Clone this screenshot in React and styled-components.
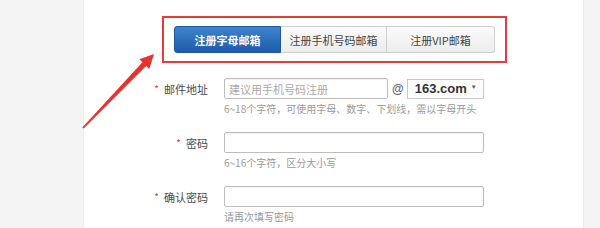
import React from "react";
import styled, { createGlobalStyle } from "styled-components";

const Global = createGlobalStyle`
  html, body { margin: 0; padding: 0; background: #fff; }
  body { font-family: "Noto Sans CJK SC", "Noto Sans", sans-serif; }
  * { box-sizing: border-box; }
`;

const Page = styled.div`
  position: relative;
  display: flex;
  width: 600px;
  height: 228px;
  overflow: hidden;
`;

const SidePanel = styled.div`
  width: ${(p) => p.$w}px;
  flex: none;
  background: #f4f4f4;
  border-${(p) => (p.$side === "left" ? "right" : "left")}: 1px solid #ececec;
`;

const Main = styled.div`
  flex: 1;
  background: #fff;
  padding: 16px 0 0 0;
  display: flex;
  flex-direction: column;
`;

const Highlight = styled.div`
  align-self: flex-start;
  margin-left: 78px;
  border: 2px solid #e63b3a;
  padding: 8px 10px;
  display: flex;
`;

const Tab = styled.div`
  width: ${(p) => p.$w}px;
  height: 27px;
  display: flex;
  align-items: center;
  justify-content: center;
  font-size: 11px;
  font-weight: ${(p) => (p.$active ? 700 : 400)};
  color: ${(p) => (p.$active ? "#fff" : "#444")};
  background: ${(p) =>
    p.$active
      ? "linear-gradient(#3f83cf, #1d5ca8)"
      : "linear-gradient(#fbfbfb, #ececec)"};
  border: 1px solid ${(p) => (p.$active ? "#1c57a0" : "#cfcfcf")};
  border-left-width: ${(p) => (p.$first ? 1 : 0)}px;
  border-radius: ${(p) =>
    p.$first ? "3px 0 0 3px" : p.$last ? "0 3px 3px 0" : "0"};
`;

const Form = styled.div`
  margin-top: 15px;
  display: flex;
  flex-direction: column;
  gap: 17px;
`;

const Row = styled.div`
  display: grid;
  grid-template-columns: 140px auto;
  grid-template-rows: 21px auto;
  row-gap: 3px;
`;

const Label = styled.div`
  grid-row: 1;
  display: flex;
  align-items: center;
  justify-content: flex-end;
  padding-right: 16px;
  font-size: 11px;
  color: #4a4a4a;
`;

const Star = styled.span`
  color: #d9363e;
  font-size: 10px;
  margin-right: 5px;
`;

const Field = styled.div`
  display: flex;
  align-items: center;
`;

const Input = styled.div`
  width: ${(p) => p.$w}px;
  height: 21px;
  border: 1px solid #bdbdbd;
  border-radius: 2px;
  box-shadow: inset 0 1px 1px rgba(0, 0, 0, 0.06);
  font-size: 11px;
  color: #aaa;
  display: flex;
  align-items: center;
  padding-left: 4px;
`;

const At = styled.span`
  font-family: "Liberation Sans", sans-serif;
  font-size: 12px;
  font-weight: 700;
  color: #666;
  margin: 0 3px 0 4px;
`;

const Select = styled.div`
  width: 77px;
  height: 20px;
  border: 1px solid #c8c8c8;
  display: flex;
  align-items: center;
  justify-content: space-between;
  padding: 0 6px 0 7px;
  font-family: "Liberation Sans", sans-serif;
  font-size: 13px;
  font-weight: 700;
  color: #333;
`;

const Caret = styled.span`
  font-size: 6px;
  color: #555;
  margin-top: -3px;
`;

const Hint = styled.div`
  grid-column: 2;
  font-size: 10px;
  line-height: 13px;
  color: #999;
`;

const Arrow = styled.svg`
  position: absolute;
  left: 0;
  top: 0;
  pointer-events: none;
`;

const rows = [
  { label: "邮件地址", w: 164, ph: "建议用手机号码注册", select: true, hint: "6~18个字符，可使用字母、数字、下划线，需以字母开头" },
  { label: "密码", w: 260, ph: "", hint: "6~16个字符，区分大小写" },
  { label: "确认密码", w: 260, ph: "", hint: "请再次填写密码" },
];

export default function App() {
  return (
    <>
      <Global />
      <Page>
        <SidePanel $w={84} $side="left" />
        <Main>
          <Highlight>
            <Tab $w={107} $active $first>注册字母邮箱</Tab>
            <Tab $w={106}>注册手机号码邮箱</Tab>
            <Tab $w={108} $last>注册VIP邮箱</Tab>
          </Highlight>
          <Form>
            {rows.map((r) => (
              <Row key={r.label}>
                <Label>
                  <Star>*</Star>
                  {r.label}
                </Label>
                <Field>
                  <Input $w={r.w}>{r.ph}</Input>
                  {r.select && (
                    <>
                      <At>@</At>
                      <Select>
                        163.com<Caret>▼</Caret>
                      </Select>
                    </>
                  )}
                </Field>
                <Hint>{r.hint}</Hint>
              </Row>
            ))}
          </Form>
        </Main>
        <SidePanel $w={17} $side="right" />
        <Arrow width="600" height="228" viewBox="0 0 600 228">
          <polygon
            points="82.3,127.5 142.4,62.3 139.3,59.3 154,54 149.3,69 146.2,66 83.7,128.5"
            fill="#e8322f"
          />
        </Arrow>
      </Page>
    </>
  );
}
